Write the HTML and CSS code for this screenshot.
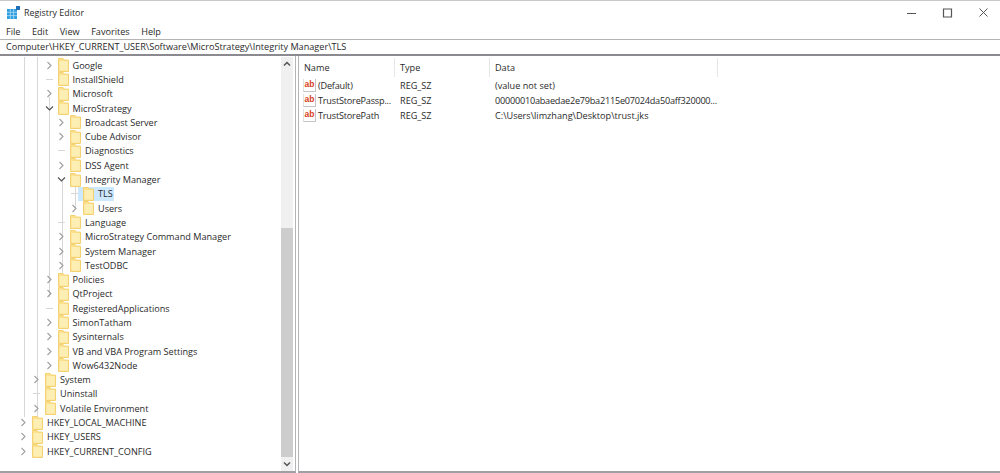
FILE: index.html
```html
<!DOCTYPE html>
<html lang="en">
<head>
<meta charset="utf-8">
<title>Registry Editor</title>
<link rel="stylesheet" href="styles.css">
</head>
<body>
<svg class="defs" width="0" height="0" aria-hidden="true">
  <symbol id="folder" viewBox="0 0 11 14">
    <path d="M.5.5h4.6l1 1.6h4.4v11.4H.5z" fill="#fde08e" stroke="#f4d272"/>
    <path d="M1.5 3h8.400v9.600H1.500z" fill="#fdeeb4"/>
  </symbol>
  <symbol id="closed" viewBox="0 0 7 9"><path d="M1.5 1l3.500 3.500L1.500 8" fill="none" stroke="#a0a0a0" stroke-width="1.100"/></symbol>
  <symbol id="open" viewBox="0 0 9 7"><path d="M1 1.500L4.500 5 8 1.500" fill="none" stroke="#555" stroke-width="1.200"/></symbol>
</svg>
<div class="window">
  <header class="titlebar">
    <svg class="appicon" width="13" height="13" viewBox="0 0 13 13" aria-hidden="true">
      <path d="M0 3h10v10H0z" fill="#2f9fe0"/>
      <path d="M3.300 3v10M6.600 3v10M0 6.300h10M0 9.600h10" stroke="#bfe3f7" stroke-width=".7"/>
      <path d="M9 0h4v4H9z" fill="#1d6fb8"/>
    </svg>
    <span class="apptitle">Registry Editor</span>
    <div class="winctrls">
      <svg width="36" height="20" viewBox="0 0 36 20" aria-hidden="true"><path d="M15 11.500h9" stroke="#555" stroke-width="1"/></svg>
      <svg width="36" height="20" viewBox="0 0 36 20" aria-hidden="true"><path d="M15.500 7h8v8h-8z" fill="none" stroke="#555" stroke-width="1.200"/></svg>
      <svg width="36" height="20" viewBox="0 0 36 20" aria-hidden="true"><path d="M15.500 6.500l8 8M23.500 6.500l-8 8" stroke="#555" stroke-width="1"/></svg>
    </div>
  </header>
  <nav class="menubar">
    <span>File</span><span>Edit</span><span>View</span><span>Favorites</span><span>Help</span>
  </nav>
  <div class="address">Computer\HKEY_CURRENT_USER\Software\MicroStrategy\Integrity Manager\TLS</div>
  <main class="panes">
    <section class="treepane">
      <div class="tree">
        <i class="guide g1"></i><i class="guide g2"></i><i class="guide g3"></i><i class="guide g4"></i><i class="guide g5"></i><i class="guide g6"></i>
        <div class="row l2"><svg class="exp"><use href="#closed"/></svg><svg class="fold"><use href="#folder"/></svg><span>Google</span></div>
        <div class="row l2 leaf"><b class="exp"></b><svg class="fold"><use href="#folder"/></svg><span>InstallShield</span></div>
        <div class="row l2"><svg class="exp"><use href="#closed"/></svg><svg class="fold"><use href="#folder"/></svg><span>Microsoft</span></div>
        <div class="row l2"><svg class="exp wide"><use href="#open"/></svg><svg class="fold"><use href="#folder"/></svg><span>MicroStrategy</span></div>
        <div class="row l3"><svg class="exp"><use href="#closed"/></svg><svg class="fold"><use href="#folder"/></svg><span>Broadcast Server</span></div>
        <div class="row l3"><svg class="exp"><use href="#closed"/></svg><svg class="fold"><use href="#folder"/></svg><span>Cube Advisor</span></div>
        <div class="row l3 leaf"><b class="exp"></b><svg class="fold"><use href="#folder"/></svg><span>Diagnostics</span></div>
        <div class="row l3"><svg class="exp"><use href="#closed"/></svg><svg class="fold"><use href="#folder"/></svg><span>DSS Agent</span></div>
        <div class="row l3"><svg class="exp wide"><use href="#open"/></svg><svg class="fold"><use href="#folder"/></svg><span>Integrity Manager</span></div>
        <div class="row l4 leaf selected"><b class="exp"></b><span class="sel"><svg class="fold"><use href="#folder"/></svg><span>TLS</span></span></div>
        <div class="row l4"><svg class="exp"><use href="#closed"/></svg><svg class="fold"><use href="#folder"/></svg><span>Users</span></div>
        <div class="row l3 leaf"><b class="exp"></b><svg class="fold"><use href="#folder"/></svg><span>Language</span></div>
        <div class="row l3"><svg class="exp"><use href="#closed"/></svg><svg class="fold"><use href="#folder"/></svg><span>MicroStrategy Command Manager</span></div>
        <div class="row l3"><svg class="exp"><use href="#closed"/></svg><svg class="fold"><use href="#folder"/></svg><span>System Manager</span></div>
        <div class="row l3"><svg class="exp"><use href="#closed"/></svg><svg class="fold"><use href="#folder"/></svg><span>TestODBC</span></div>
        <div class="row l2"><svg class="exp"><use href="#closed"/></svg><svg class="fold"><use href="#folder"/></svg><span>Policies</span></div>
        <div class="row l2"><svg class="exp"><use href="#closed"/></svg><svg class="fold"><use href="#folder"/></svg><span>QtProject</span></div>
        <div class="row l2 leaf"><b class="exp"></b><svg class="fold"><use href="#folder"/></svg><span>RegisteredApplications</span></div>
        <div class="row l2"><svg class="exp"><use href="#closed"/></svg><svg class="fold"><use href="#folder"/></svg><span>SimonTatham</span></div>
        <div class="row l2"><svg class="exp"><use href="#closed"/></svg><svg class="fold"><use href="#folder"/></svg><span>Sysinternals</span></div>
        <div class="row l2"><svg class="exp"><use href="#closed"/></svg><svg class="fold"><use href="#folder"/></svg><span>VB and VBA Program Settings</span></div>
        <div class="row l2"><svg class="exp"><use href="#closed"/></svg><svg class="fold"><use href="#folder"/></svg><span>Wow6432Node</span></div>
        <div class="row l1"><svg class="exp"><use href="#closed"/></svg><svg class="fold"><use href="#folder"/></svg><span>System</span></div>
        <div class="row l1 leaf"><b class="exp"></b><svg class="fold"><use href="#folder"/></svg><span>Uninstall</span></div>
        <div class="row l1"><svg class="exp"><use href="#closed"/></svg><svg class="fold"><use href="#folder"/></svg><span>Volatile Environment</span></div>
        <div class="row l0"><svg class="exp"><use href="#closed"/></svg><svg class="fold"><use href="#folder"/></svg><span>HKEY_LOCAL_MACHINE</span></div>
        <div class="row l0"><svg class="exp"><use href="#closed"/></svg><svg class="fold"><use href="#folder"/></svg><span>HKEY_USERS</span></div>
        <div class="row l0"><svg class="exp"><use href="#closed"/></svg><svg class="fold"><use href="#folder"/></svg><span>HKEY_CURRENT_CONFIG</span></div>
      </div>
      <div class="scrollbar">
        <svg class="arrow" width="12" height="14" viewBox="0 0 12 14" aria-hidden="true"><path d="M3 8.500l3-3 3 3" fill="none" stroke="#555" stroke-width="1.500"/></svg>
        <div class="track"><div class="thumb"></div></div>
        <svg class="arrow" width="12" height="14" viewBox="0 0 12 14" aria-hidden="true"><path d="M3 5.500l3 3 3-3" fill="none" stroke="#555" stroke-width="1.500"/></svg>
      </div>
    </section>
    <section class="listpane">
      <div class="listhead">
        <span class="c1">Name</span><span class="c2">Type</span><span class="c3">Data</span>
      </div>
      <div class="listrow"><span class="c1"><i class="ab">ab</i>(Default)</span><span class="c2">REG_SZ</span><span class="c3">(value not set)</span></div>
      <div class="listrow"><span class="c1"><i class="ab">ab</i>TrustStorePassp...</span><span class="c2">REG_SZ</span><span class="c3 hex">00000010abaedae2e79ba2115e07024da50aff320000...</span></div>
      <div class="listrow"><span class="c1"><i class="ab">ab</i>TrustStorePath</span><span class="c2">REG_SZ</span><span class="c3">C:\Users\limzhang\Desktop\trust.jks</span></div>
    </section>
  </main>
</div>
</body>
</html>
```
FILE: styles.css
```css
* { box-sizing: border-box; }
html, body { margin: 0; height: 100%; }
body {
  background: #fff;
  color: #2a2a2a;
  font-family: "Open Sans", "Noto Sans", "Liberation Sans", sans-serif;
  font-size: 9.150px;
  overflow: hidden;
}
.defs { position: absolute; }
.window {
  height: 473px;
  display: flex;
  flex-direction: column;
  border-top: 1px solid #c8c8c8;
}
.titlebar {
  height: 22px;
  display: flex;
  align-items: center;
  padding-left: 7px;
  font-size: 8.900px;
}
.appicon { margin-right: 4px; }
.apptitle { flex: 1; }
.winctrls { display: flex; }
.menubar {
  height: 17px;
  display: flex;
  align-items: center;
  gap: 11.500px;
  padding-left: 6px;
  border-bottom: 1px solid #b4b4b4;
}
.address {
  height: 16px;
  line-height: 13px;
  padding-left: 6px;
  border-bottom: 2px solid #8a8a90;
}
.panes { flex: 1; display: flex; min-height: 0; }
.treepane {
  width: 296px;
  display: flex;
  padding: 1px 2px 0 1px;
  border-right: 1px solid #b4b4b8;
  border-bottom: 2px solid #a0a0a4;
}
.tree { flex: 1; position: relative; padding-top: 1px; min-width: 0; }
.guide { position: absolute; width: 1px; background: #d6d6d6; }
.g1 { left: 23px; top: 0; height: 360px; }
.g2 { left: 36px; top: 0; height: 356px; }
.g3 { left: 36px; top: 320px; height: 52px; }
.g4 { left: 48px; top: 40px; height: 200px; }
.g5 { left: 61px; top: 124px; height: 92px; }
.g6 { left: 74px; top: 124px; height: 28px; }
.row {
  position: relative;
  height: 14.300px;
  display: flex;
  align-items: center;
  white-space: nowrap;
}
.l0 { padding-left: 19px; }
.l1 { padding-left: 32px; }
.l2 { padding-left: 44.500px; }
.l3 { padding-left: 57px; }
.l4 { padding-left: 70px; }
.exp { width: 7px; height: 9px; margin-right: 5px; flex: none; }
.exp.wide { width: 9px; height: 7px; margin-left: -1px; margin-right: 4px; }
.leaf .exp { height: 1px; background: #d6d6d6; }
.fold { width: 11px; height: 14px; margin-right: 4px; flex: none; }
.sel {
  display: flex;
  align-items: center;
  height: 14.300px;
  margin-left: -5px;
  padding: 0 2px 0 5px;
  width: 36px;
  background: #cce8ff;
}
.scrollbar {
  width: 12px;
  flex: none;
  display: flex;
  flex-direction: column;
  background: #f0f0f0;
}
.arrow { flex: none; }
.track { flex: 1; display: flex; flex-direction: column; justify-content: flex-end; }
.thumb { height: 229px; background: #cdcdcd; }
.listpane {
  flex: 1;
  margin-left: 2px;
  border-left: 1px solid #b4b4b8;
  border-bottom: 2px solid #a0a0a4;
}
.listhead, .listrow { display: flex; white-space: nowrap; }
.listhead { height: 21px; align-items: center; margin-top: 1px; }
.listrow { height: 15px; align-items: center; }
.listhead span { height: 19px; display: flex; align-items: center; border-right: 1px solid #e6e6e6; }
.c1 { width: 96px; padding-left: 5px; display: flex; align-items: center; flex: none; }
.c2 { width: 95px; padding-left: 5px; flex: none; }
.c3 { width: 228px; padding-left: 5px; flex: none; }
.hex { letter-spacing: -.23px; }
.listrow .c1 { padding-left: 4px; letter-spacing: -.2px; }
.ab {
  width: 13px;
  height: 13px;
  margin-right: 2px;
  flex: none;
  display: inline-block;
  border-right: 1px solid #c4c4c4;
  border-bottom: 1px solid #c4c4c4;
  border-left: 1px solid #e2e2e2;
  background: #fff;
  color: #d8401c;
  font: bold 8.500px/10px "Liberation Sans", sans-serif;
  letter-spacing: 0;
  text-align: center;
}
```
